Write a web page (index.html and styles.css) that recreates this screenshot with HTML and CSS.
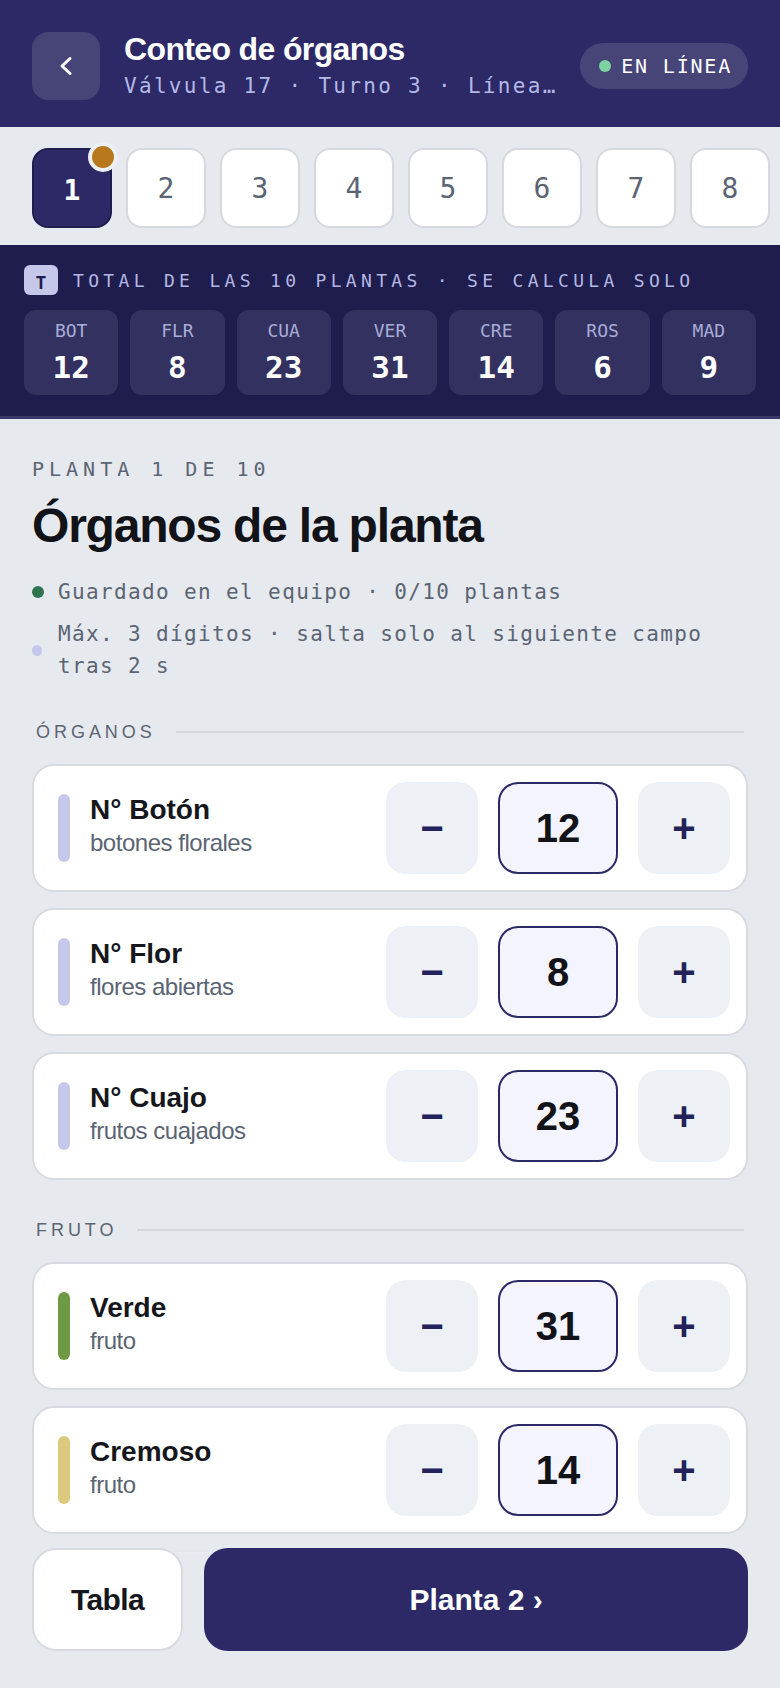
FILE: index.html
```html
<!DOCTYPE html>
<html lang="es">
<head>
<meta charset="utf-8">
<title>Conteo de órganos</title>
<link rel="stylesheet" href="styles.css">
</head>
<body>
<div class="app">
  <header class="topbar">
    <button class="back" aria-label="Volver">
      <svg width="68" height="68" viewBox="0 0 68 68"><polyline points="38,26.5 30,34 38,41.5" fill="none" stroke="#ffffff" stroke-width="3" stroke-linecap="round" stroke-linejoin="round"/></svg>
    </button>
    <div class="titles">
      <div class="title">Conteo de órganos</div>
      <div class="subtitle">Válvula 17 · Turno 3 · Línea 4 · Lote B</div>
    </div>
    <div class="status-pill"><span class="pill-dot"></span>EN LÍNEA</div>
  </header>

  <nav class="plant-tabs">
    <div class="tab active">1<span class="tab-badge"></span></div>
    <div class="tab">2</div>
    <div class="tab">3</div>
    <div class="tab">4</div>
    <div class="tab">5</div>
    <div class="tab">6</div>
    <div class="tab">7</div>
    <div class="tab">8</div>
    <div class="tab">9</div>
    <div class="tab">10</div>
  </nav>

  <section class="totals">
    <div class="totals-head"><span class="t-badge">T</span><span class="totals-label">TOTAL DE LAS 10 PLANTAS · SE CALCULA SOLO</span></div>
    <div class="totals-grid">
      <div class="total-card"><div class="total-key">BOT</div><div class="total-val">12</div></div>
      <div class="total-card"><div class="total-key">FLR</div><div class="total-val">8</div></div>
      <div class="total-card"><div class="total-key">CUA</div><div class="total-val">23</div></div>
      <div class="total-card"><div class="total-key">VER</div><div class="total-val">31</div></div>
      <div class="total-card"><div class="total-key">CRE</div><div class="total-val">14</div></div>
      <div class="total-card"><div class="total-key">ROS</div><div class="total-val">6</div></div>
      <div class="total-card"><div class="total-key">MAD</div><div class="total-val">9</div></div>
    </div>
  </section>

  <main class="content">
    <div class="eyebrow">PLANTA 1 DE 10</div>
    <h1 class="page-title">Órganos de la planta</h1>
    <ul class="notes">
      <li class="note"><span class="dot dot-green"></span><span>Guardado en el equipo · 0/10 plantas</span></li>
      <li class="note"><span class="dot dot-lav"></span><span>Máx. 3 dígitos · salta solo al siguiente campo tras 2 s</span></li>
    </ul>

    <div class="section-head"><span>Órganos</span><span class="rule"></span></div>
    <div class="cards">
      <div class="card">
        <span class="bar bar-lav"></span>
        <div class="label-block"><div class="label">N° Botón</div><div class="sub">botones florales</div></div>
        <div class="stepper"><button class="step-btn">−</button><div class="value">12</div><button class="step-btn">+</button></div>
      </div>
      <div class="card">
        <span class="bar bar-lav"></span>
        <div class="label-block"><div class="label">N° Flor</div><div class="sub">flores abiertas</div></div>
        <div class="stepper"><button class="step-btn">−</button><div class="value">8</div><button class="step-btn">+</button></div>
      </div>
      <div class="card">
        <span class="bar bar-lav"></span>
        <div class="label-block"><div class="label">N° Cuajo</div><div class="sub">frutos cuajados</div></div>
        <div class="stepper"><button class="step-btn">−</button><div class="value">23</div><button class="step-btn">+</button></div>
      </div>
    </div>

    <div class="section-head"><span>Fruto</span><span class="rule"></span></div>
    <div class="cards">
      <div class="card">
        <span class="bar bar-green"></span>
        <div class="label-block"><div class="label">Verde</div><div class="sub">fruto</div></div>
        <div class="stepper"><button class="step-btn">−</button><div class="value">31</div><button class="step-btn">+</button></div>
      </div>
      <div class="card">
        <span class="bar bar-yellow"></span>
        <div class="label-block"><div class="label">Cremoso</div><div class="sub">fruto</div></div>
        <div class="stepper"><button class="step-btn">−</button><div class="value">14</div><button class="step-btn">+</button></div>
      </div>
      <div class="card">
        <span class="bar bar-pink"></span>
        <div class="label-block"><div class="label">Rosado</div><div class="sub">fruto</div></div>
        <div class="stepper"><button class="step-btn">−</button><div class="value">6</div><button class="step-btn">+</button></div>
      </div>
      <div class="card">
        <span class="bar bar-red"></span>
        <div class="label-block"><div class="label">Maduro</div><div class="sub">fruto</div></div>
        <div class="stepper"><button class="step-btn">−</button><div class="value">9</div><button class="step-btn">+</button></div>
      </div>
    </div>
  </main>

  <footer class="actions">
    <button class="btn-table">Tabla</button>
    <button class="btn-next">Planta 2 ›</button>
  </footer>
</div>
</body>
</html>
```

FILE: styles.css
```css
* { box-sizing: border-box; }
html, body { margin: 0; padding: 0; }
body {
  background: #e6e9ee;
  font-family: "Liberation Sans", Arial, sans-serif;
  color: #15171c;
}
.app {
  position: relative;
  height: 100vh;
  display: flex;
  flex-direction: column;
  overflow: hidden;
}

/* header */
.topbar {
  display: flex;
  align-items: center;
  padding: 30px 32px 26px;
  background: #2c2966;
}
.back {
  flex: none;
  width: 68px;
  height: 68px;
  margin-right: 24px;
  padding: 0;
  border: 0;
  border-radius: 16px;
  background: #474578;
  display: flex;
  align-items: center;
  justify-content: center;
}
.back svg { display: block; }
.titles {
  flex: 1;
  min-width: 0;
  margin-right: 16px;
}
.title {
  color: #ffffff;
  font-weight: 700;
  font-size: 32px;
  line-height: 38px;
  letter-spacing: -0.02em;
  white-space: nowrap;
}
.subtitle {
  margin-top: 3px;
  font-family: "DejaVu Sans Mono", monospace;
  font-size: 21px;
  line-height: 30px;
  letter-spacing: 0.11em;
  color: #b3b8e6;
  white-space: nowrap;
  overflow: hidden;
  text-overflow: ellipsis;
}
.status-pill {
  flex: none;
  display: flex;
  align-items: center;
  gap: 10px;
  height: 46px;
  padding: 0 16px 0 19px;
  border-radius: 23px;
  background: #474578;
  color: #ffffff;
  font-family: "DejaVu Sans Mono", monospace;
  font-size: 20px;
  letter-spacing: 0.09em;
}
.pill-dot {
  width: 12px;
  height: 12px;
  border-radius: 50%;
  background: #7dd3a2;
}

/* plant tabs */
.plant-tabs {
  flex: none;
  display: flex;
  gap: 14px;
  padding: 21px 32px 17px;
  overflow: hidden;
}
.tab {
  position: relative;
  flex: 0 0 80px;
  height: 80px;
  border: 2px solid #d5d9df;
  border-radius: 16px;
  background: #ffffff;
  display: flex;
  align-items: center;
  justify-content: center;
  font-family: "DejaVu Sans Mono", monospace;
  font-size: 28px;
  color: #5b6472;
}
.tab.active {
  background: #2c2966;
  border-color: #1f1d4d;
  color: #ffffff;
  font-weight: 700;
  padding-top: 5px;
}
.tab-badge {
  position: absolute;
  top: -8px;
  right: -8px;
  width: 30px;
  height: 30px;
  border-radius: 50%;
  background: #b8791c;
  border: 4px solid #eceff3;
}

/* totals */
.totals {
  flex: none;
  background: #1f1d4d;
  padding: 20px 24px 21px;
  border-bottom: 3px solid #3a386b;
}
.totals-head {
  display: flex;
  align-items: center;
  gap: 15px;
  height: 30px;
}
.t-badge {
  width: 34px;
  height: 30px;
  border-radius: 6px;
  background: #c5c8ea;
  color: #1f1d4d;
  font-family: "DejaVu Sans Mono", monospace;
  font-weight: 700;
  font-size: 18px;
  display: flex;
  align-items: center;
  justify-content: center;
  padding-top: 4px;
}
.totals-label {
  font-family: "DejaVu Sans Mono", monospace;
  font-size: 18px;
  letter-spacing: 0.24em;
  color: #b3b7e3;
  white-space: nowrap;
}
.totals-grid {
  display: grid;
  grid-template-columns: repeat(7, 1fr);
  gap: 12px;
  margin-top: 15px;
}
.total-card {
  background: #33315f;
  border-radius: 12px;
  padding: 10px 0;
  text-align: center;
}
.total-key {
  font-family: "DejaVu Sans Mono", monospace;
  font-size: 18px;
  line-height: 22px;
  color: #a8acd8;
}
.total-val {
  margin-top: 7px;
  font-family: "DejaVu Sans Mono", monospace;
  font-weight: 700;
  font-size: 31px;
  line-height: 36px;
  color: #ffffff;
}

/* content */
.content {
  flex: 1;
  min-height: 0;
  overflow: hidden;
  padding: 38px 32px 0;
}
.eyebrow {
  font-family: "DejaVu Sans Mono", monospace;
  font-size: 20px;
  line-height: 24px;
  letter-spacing: 0.25em;
  color: #5b6472;
}
.page-title {
  margin: 18px 0 0;
  font-size: 48px;
  line-height: 53px;
  font-weight: 700;
  letter-spacing: -0.025em;
  color: #111318;
}
.notes {
  list-style: none;
  margin: 24px 0 0;
  padding: 0;
  display: flex;
  flex-direction: column;
  gap: 10px;
}
.note {
  display: flex;
  align-items: center;
  gap: 14px;
  font-family: "DejaVu Sans Mono", monospace;
  font-size: 21px;
  line-height: 32px;
  letter-spacing: 0.065em;
  color: #5b6472;
}
.dot {
  flex: none;
  width: 12px;
  height: 12px;
  border-radius: 50%;
}
.dot-green { background: #2f7450; }
.dot-lav {
  width: 10px;
  height: 11px;
  margin-right: 2px;
  background: #c5c8ea;
}

.section-head {
  display: flex;
  align-items: center;
  gap: 20px;
  margin-top: 38px;
  padding: 0 4px;
  font-size: 18px;
  line-height: 24px;
  letter-spacing: 0.22em;
  text-transform: uppercase;
  color: #5b6472;
}
.rule {
  flex: 1;
  height: 2px;
  background: #d3d7dd;
}
.cards {
  display: flex;
  flex-direction: column;
  gap: 16px;
  margin-top: 20px;
}
.card {
  display: flex;
  align-items: center;
  border: 2px solid #d7dbe1;
  border-radius: 22px;
  background: #ffffff;
  padding: 16px 16px 16px 24px;
}
.bar {
  flex: none;
  width: 12px;
  height: 68px;
  margin-right: 20px;
  border-radius: 6px;
}
.bar-lav { background: #c5c8e8; }
.bar-green { background: #6f9a45; }
.bar-yellow { background: #dcc97e; }
.bar-pink { background: #e6a3a8; }
.bar-red { background: #c2463f; }
.label-block {
  flex: 1;
  min-width: 0;
  padding-bottom: 6px;
}
.label {
  font-size: 28px;
  line-height: 34px;
  font-weight: 700;
  color: #15171c;
}
.sub {
  margin-top: 1px;
  font-size: 24px;
  line-height: 30px;
  letter-spacing: -0.02em;
  color: #5b6472;
}
.stepper {
  flex: none;
  display: flex;
  gap: 20px;
}
.step-btn {
  width: 92px;
  height: 92px;
  padding: 0;
  border: 0;
  border-radius: 20px;
  background: #edf0f4;
  color: #23215a;
  font-family: inherit;
  font-size: 40px;
  font-weight: 700;
  display: flex;
  align-items: center;
  justify-content: center;
}
.value {
  width: 120px;
  height: 92px;
  border: 2px solid #2c2966;
  border-radius: 20px;
  background: #f3f4fd;
  font-size: 40px;
  font-weight: 700;
  color: #111318;
  display: flex;
  align-items: center;
  justify-content: center;
}

/* footer */
.actions {
  position: absolute;
  left: 0;
  right: 0;
  bottom: 0;
  display: flex;
  gap: 21px;
  padding: 16px 32px 37px;
  background: linear-gradient(rgba(230, 233, 238, 0) 0, rgba(230, 233, 238, 0.85) 16px, #e6e9ee 24px);
}
.btn-table {
  flex: none;
  height: 103px;
  padding: 0 37px;
  border: 2px solid #d7dbe1;
  border-radius: 24px;
  background: #ffffff;
  font-family: inherit;
  font-size: 30px;
  font-weight: 700;
  letter-spacing: -0.02em;
  color: #15171c;
}
.btn-next {
  flex: 1;
  height: 103px;
  border: 0;
  border-radius: 24px;
  background: #2c2966;
  font-family: inherit;
  font-size: 30px;
  font-weight: 700;
  letter-spacing: 0;
  color: #ffffff;
}
```
